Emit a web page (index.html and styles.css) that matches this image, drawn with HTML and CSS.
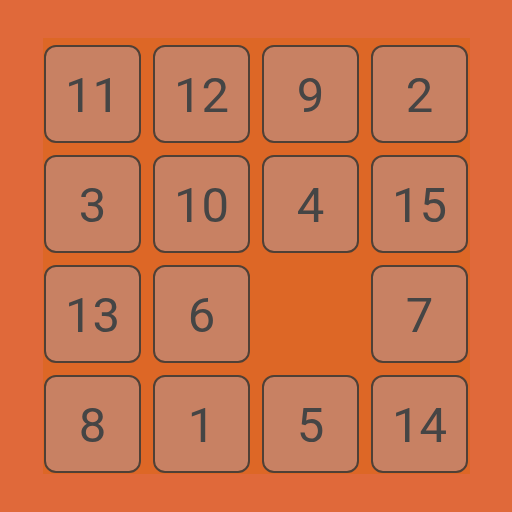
FILE: index.html
```html
<!DOCTYPE html>
<html>
<head>
<meta charset="utf-8">
<link rel="stylesheet" href="styles.css">
</head>
<body>
<div class="page">
  <div class="board">
    <div class="tile">11</div>
    <div class="tile">12</div>
    <div class="tile">9</div>
    <div class="tile">2</div>
    <div class="tile">3</div>
    <div class="tile">10</div>
    <div class="tile">4</div>
    <div class="tile">15</div>
    <div class="tile">13</div>
    <div class="tile">6</div>
    <div class="empty"></div>
    <div class="tile">7</div>
    <div class="tile">8</div>
    <div class="tile">1</div>
    <div class="tile">5</div>
    <div class="tile">14</div>
  </div>
</div>
</body>
</html>
```
FILE: styles.css
```css
html, body {
  margin: 0;
  padding: 0;
  background: #e0693a;
}
.page {
  width: 512px;
  height: 512px;
  padding: 38px 0 0 43px;
  box-sizing: border-box;
}
.board {
  width: 427px;
  height: 436px;
  box-sizing: border-box;
  padding: 7px 2px 1px 1px;
  background: #dd6726;
  display: grid;
  grid-template-columns: repeat(4, 97px);
  grid-template-rows: repeat(4, 98px);
  column-gap: 12px;
  row-gap: 12px;
}
.tile {
  box-sizing: border-box;
  border: 2px solid #4f4036;
  border-radius: 12px;
  background: #c88163;
  color: #454545;
  font-family: Roboto, "Noto Sans", sans-serif;
  font-size: 49px;
  display: flex;
  align-items: center;
  justify-content: center;
  padding-top: 2px;
}
```
